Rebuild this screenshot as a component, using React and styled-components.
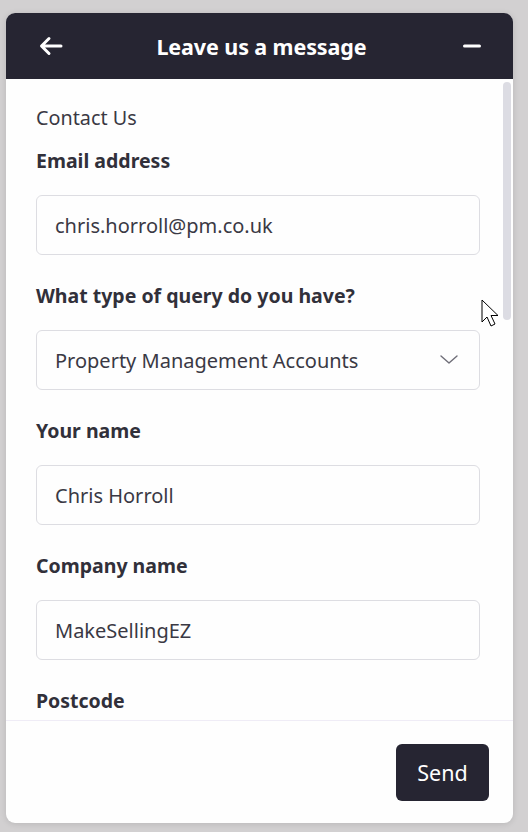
import styled, {createGlobalStyle} from 'styled-components'

const GlobalStyle = createGlobalStyle`
  html, body {
    margin: 0;
    padding: 0;
    background: #d2d0d1;
  }
  body {
    font-family: "Noto Sans", "Open Sans", sans-serif;
    color: #31303a;
  }
`

const Page = styled.div`
  height: 832px;
  padding: 13px 15px 9px 6px;
  box-sizing: border-box;
  display: flex;
  position: relative;
`

const Panel = styled.div`
  flex: 1;
  display: flex;
  flex-direction: column;
  background: #fefefe;
  border-radius: 9px;
  overflow: hidden;
  position: relative;
  box-shadow: 0 1px 6px rgba(0, 0, 0, 0.12);
`

const Header = styled.header`
  height: 66px;
  flex-shrink: 0;
  background: #262532;
  display: flex;
  align-items: center;
  justify-content: space-between;
  padding: 0 28px 0 32px;
  color: #ffffff;
`

const IconButton = styled.button`
  border: 0;
  background: transparent;
  padding: 0;
  width: 26px;
  height: 26px;
  display: flex;
  align-items: center;
  justify-content: center;
  color: #ffffff;
`

const Title = styled.h1`
  margin: 0;
  font-size: 21.5px;
  font-weight: 700;
  letter-spacing: -0.1px;
`

const Body = styled.div`
  flex: 1;
  overflow: hidden;
  padding: 24px 33px 40px 30px;
`

const ScrollThumb = styled.div`
  position: absolute;
  top: 69px;
  right: 2px;
  width: 8px;
  height: 238px;
  border-radius: 4px;
  background: #dcdce3;
`

const Intro = styled.p`
  margin: 0 0 14px;
  font-size: 19.8px;
  line-height: 30px;
  color: #3a3944;
`

const Field = styled.div`
  display: flex;
  flex-direction: column;
  gap: 20px;
  margin-bottom: 27px;
`

const Label = styled.label`
  font-size: 19.5px;
  font-weight: 700;
  line-height: 28px;
  color: #31303a;
`

const Box = styled.div`
  height: 60px;
  box-sizing: border-box;
  border: 1px solid #dddde2;
  border-radius: 6px;
  display: flex;
  align-items: center;
  justify-content: space-between;
  padding: 0 20px 0 18px;
  font-size: 20px;
  color: #3a3944;
  background: #fefefe;
`

const Footer = styled.footer`
  flex-shrink: 0;
  border-top: 1px solid #efecf6;
  display: flex;
  justify-content: flex-end;
  padding: 23px 24px 22px;
`

const SendButton = styled.button`
  width: 93px;
  height: 57px;
  border: 0;
  border-radius: 6px;
  background: #262532;
  color: #ffffff;
  font-family: inherit;
  font-size: 21.5px;
`

const Cursor = styled.svg`
  position: absolute;
  left: 481px;
  top: 299px;
`

const fields = [
  {label: 'Email address', value: 'chris.horroll@pm.co.uk'},
  {label: 'What type of query do you have?', value: 'Property Management Accounts', select: true},
  {label: 'Your name', value: 'Chris Horroll'},
  {label: 'Company name', value: 'MakeSellingEZ'},
  {label: 'Postcode', value: ''},
]

const Chevron = () => (
  <svg width="20" height="12" viewBox="0 0 20 12" fill="none">
    <path d="M2 2l8 7 8-7" stroke="#6f6e78" strokeWidth="1.4" strokeLinecap="round" strokeLinejoin="round" />
  </svg>
)

const App = () => (
  <Page>
    <GlobalStyle />
    <Panel>
      <Header>
        <IconButton aria-label="Back">
          <svg width="24" height="20" viewBox="0 0 24 20" fill="none">
            <path d="M22 10H3M10 2.5L2.5 10 10 17.5" stroke="#fff" strokeWidth="3" strokeLinecap="round" strokeLinejoin="round" />
          </svg>
        </IconButton>
        <Title>Leave us a message</Title>
        <IconButton aria-label="Minimise">
          <svg width="18" height="4" viewBox="0 0 18 4" fill="none">
            <path d="M1.5 2h15" stroke="#fff" strokeWidth="3" strokeLinecap="round" />
          </svg>
        </IconButton>
      </Header>
      <Body>
        <Intro>Contact Us</Intro>
        {fields.map(f => (
          <Field key={f.label}>
            <Label>{f.label}</Label>
            <Box>
              <span>{f.value}</span>
              {f.select && <Chevron />}
            </Box>
          </Field>
        ))}
      </Body>
      <ScrollThumb />
      <Footer>
        <SendButton>Send</SendButton>
      </Footer>
    </Panel>
    <Cursor width="20" height="30" viewBox="0 0 20 30">
      <path d="M1 1v22l5-5 4 9 4-2-4-8.5h7z" fill="#fff" stroke="#000" strokeWidth="1" strokeLinejoin="miter" />
    </Cursor>
  </Page>
)

export default App
